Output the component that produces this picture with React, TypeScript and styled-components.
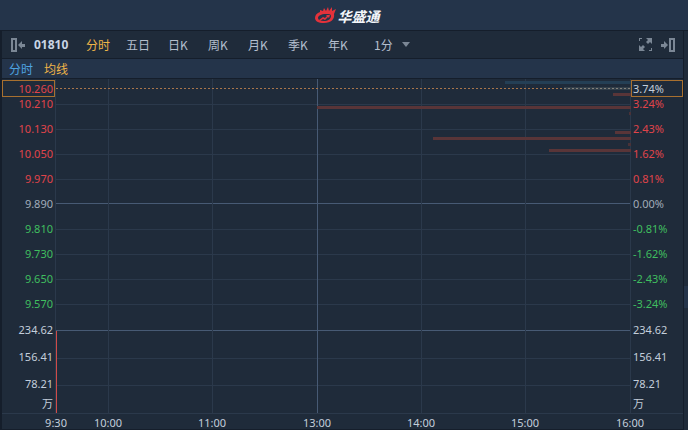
import React from 'react';
import styled, { createGlobalStyle } from 'styled-components';

const c = {
  bar: '#24344a',
  panel: '#1f2b3a',
  line: '#151e2b',
  grid: '#2b394b',
  strong: '#475a74',
  text: '#b4bfce',
  bright: '#c3cedb',
  up: '#e0444a',
  down: '#3fbe5f',
  amber: '#f0b548',
  box: '#a8702f',
  icon: '#7b8795',
};

const Global = createGlobalStyle`
  * { box-sizing: border-box; }
  body { margin: 0; background: ${c.panel}; color: ${c.text};
    font-family: "Noto Sans", "Noto Sans CJK SC", sans-serif; font-size: 11px; }
  button, select { font: inherit; color: inherit; background: none; border: 0; margin: 0; padding: 0; cursor: pointer; }
`;

const Page = styled.div`
  min-height: 100vh;
  display: flex;
  flex-direction: column;
`;
const Header = styled.header`
  height: 31px;
  display: flex;
  align-items: center;
  justify-content: center;
  gap: 2px;
  background: ${c.bar};
  border-bottom: 1px solid ${c.line};
  padding: 1px 0 0 6px;
`;
const Brand = styled.h1`
  margin: 0;
  font: italic 700 14px/20px "Noto Sans CJK SC", sans-serif;
  color: #f3f6fa;
`;
const Body = styled.div`
  flex: 1;
  display: grid;
  grid-template-columns: minmax(0, 1fr) 4px;
`;
const Panel = styled.main`
  border: solid ${c.line};
  border-width: 0 1px 1px 2px;
  display: flex;
  flex-direction: column;
`;
const SideStrip = styled.div`
  padding-top: 255px;
  &::before { content: ''; display: block; height: 22px; background: ${c.bar}; }
`;
const Toolbar = styled.nav`
  height: 28px;
  display: flex;
  align-items: center;
  padding: 0 8px 0 9px;
  font-size: 12px;
  font-family: "Noto Sans CJK SC", sans-serif;
  color: ${c.text};
  border-bottom: 1px solid ${c.line};
`;
const IconButton = styled.button`
  display: flex;
  margin-left: 8px;
  &:first-child { margin-left: 0; }
`;
const Symbol = styled.strong`
  width: 44px;
  margin-left: 8px;
  font: 700 12px/20px "Noto Sans", sans-serif;
  color: #c9d5e5;
`;
const Tab = styled.button<{ $active?: boolean }>`
  width: 40px;
  height: 20px;
  line-height: 20px;
  text-align: center;
  color: ${p => (p.$active ? c.amber : c.text)};
`;
const Period = styled.label`
  display: flex;
  align-items: center;
  gap: 8px;
  margin: 0 auto 0 16px;
`;
const PeriodSelect = styled.select`
  appearance: none;
  width: 20px;
  height: 20px;
`;
const Legend = styled.div`
  height: 20px;
  display: flex;
  gap: 11px;
  padding-left: 7px;
  font: 12px/19px "Noto Sans CJK SC", sans-serif;
  background: ${c.bar};
  border-bottom: 1px solid ${c.line};
`;
const Series = styled.span<{ $color: string }>`
  color: ${p => p.$color};
`;
const Chart = styled.section`
  flex: 1;
  display: grid;
  grid-template-columns: 53px minmax(0, 1fr) 52px;
  grid-template-rows: minmax(334px, 1fr) 16px;
`;
const Axis = styled.div<{ $right?: boolean }>`
  display: flex;
  flex-direction: column;
  padding-top: 1px;
  text-align: ${p => (p.$right ? 'left' : 'right')};
`;
const Tick = styled.div<{ $color: string; $h: number }>`
  height: ${p => p.$h}px;
  line-height: ${p => p.$h}px;
  padding: 0 2px;
  color: ${p => p.$color};
`;
const TopTick = styled(Tick)`
  margin-bottom: 5px;
`;
const Current = styled.div<{ $color: string }>`
  height: 17px;
  line-height: 15px;
  padding: 0 1px;
  border: 1px solid ${c.box};
  color: ${p => p.$color};
`;
const Plot = styled.svg`
  width: 100%;
  height: 100%;
  min-height: 0;
  display: block;
  shape-rendering: crispEdges;
`;
const Times = styled.div`
  grid-column: 1 / -1;
  display: grid;
  grid-template-columns: 52fr 104fr 105fr 104fr 104fr 105fr 0;
  padding: 0 53px 0 54px;
  border-top: 1px solid ${c.grid};
  line-height: 17px;
  color: ${c.bright};
`;
const Time = styled.span`
  width: 0;
  display: flex;
  justify-content: center;
  white-space: nowrap;
`;

const levels: [string, string, string][] = [
  ['10.130', '2.43%', c.up],
  ['10.050', '1.62%', c.up],
  ['9.970', '0.81%', c.up],
  ['9.890', '0.00%', '#a1abb9'],
  ['9.810', '-0.81%', c.down],
  ['9.730', '-1.62%', c.down],
  ['9.650', '-2.43%', c.down],
  ['9.570', '-3.24%', c.down],
];
const volumes = ['234.62', '156.41', '78.21'];
const times = ['9:30', '10:00', '11:00', '13:00', '14:00', '15:00', '16:00'];
const tabs = ['分时', '五日', '日K', '周K', '月K', '季K', '年K'];
const depth: [number, number, string][] = [
  [450, 2, '#243f55'],
  [509, 8, '#33404b'],
  [558, 14, '#593538'],
  [262, 27, '#593538'],
  [574, 33, '#493238'],
  [560, 52, '#593538'],
  [378, 58, '#593538'],
  [573, 64, '#493238'],
  [494, 70, '#593538'],
];

function PriceAxis({ right }: { right?: boolean }) {
  return (
    <Axis $right={right}>
      <Current $color={right ? c.bright : c.up}>{right ? '3.74%' : '10.260'}</Current>
      <TopTick $h={14} $color={c.up}>{right ? '3.24%' : '10.210'}</TopTick>
      {levels.map(([price, pct, color]) => (
        <Tick key={price} $h={25} $color={color}>{right ? pct : price}</Tick>
      ))}
      {volumes.map(v => <Tick key={v} $h={27} $color={c.bright}>{v}</Tick>)}
      <Tick $h={14} $color={c.bright}>万</Tick>
    </Axis>
  );
}

function PlotArea() {
  return (
    <Plot viewBox="0 0 576 334" preserveAspectRatio="none" role="img" aria-label="分时">
      <path d="M0 25.5H576M0 50.5H576M0 75.5H576M0 100.5H576M0 150.5H576M0 175.5H576M0 200.5H576M0 225.5H576M0 279.5H576M0 306.5H576" stroke={c.grid} />
      <path d="M0 124.5H576M0 251.5H576M262.5 0V334" stroke={c.strong} />
      <path d="M.5 0V334M53.5 0V334M157.5 0V334M366.5 0V334M470.5 0V334M575.5 0V334" stroke={c.grid} />
      {depth.map(([x, y, fill]) => (
        <rect key={y} x={x} y={y} width={576 - x} height="3" fill={fill} />
      ))}
      <path d="M1 9.5H509" stroke="#a8754b" strokeDasharray="2 2" />
      <path d="M509 9.5H575" stroke="#83817b" strokeDasharray="2 2" />
      <path d="M1.5 252V334" stroke="#d04b48" />
    </Plot>
  );
}

const DockIcon = ({ flip }: { flip?: boolean }) => (
  <svg width="15" height="14" viewBox="0 0 15 14" fill={c.icon}>
    <g transform={flip ? 'matrix(-1 0 0 1 15 0)' : undefined}>
      <path fillRule="evenodd" d="M0 0H6V14H0ZM2 2V12H4V2Z" />
      <path d="M7 7L11 3V6H14V9H11V11Z" />
    </g>
  </svg>
);

export default function App() {
  return (
    <Page>
      <Global />
      <Header>
        <svg width="21" height="17" viewBox="0 0 21 17" aria-hidden="true">
          <g fill="#e3323b">
            <path fillRule="evenodd" d="M5 5L5 3L8 4L9 1L11 4L13 0L14 4L17 0L17 4L21 2L19 7C20 12 16 16 9 16C3 16 0 14 0 11C0 8 2 6 5 5ZM3 11C3 13 5 14 9 14C13 14 16 12 16 9C16 7 14 7 11 7C6 7 3 9 3 11Z" />
            <path d="M4 13L8 10L10 11L12 9L11 8L15 8L14 11L13 10L10 13L8 12L5 14Z" />
          </g>
        </svg>
        <Brand>华盛通</Brand>
      </Header>
      <Body>
        <Panel>
          <Toolbar>
            <IconButton aria-label="展开左栏"><DockIcon /></IconButton>
            <Symbol>01810</Symbol>
            {tabs.map((t, i) => <Tab key={t} $active={i === 0}>{t}</Tab>)}
            <Period>
              <PeriodSelect aria-label="周期" defaultValue="1"><option value="1">1分</option></PeriodSelect>
              <svg width="8" height="5" viewBox="0 0 8 5" aria-hidden="true"><path d="M0 0H8L4 5Z" fill={c.icon} /></svg>
            </Period>
            <IconButton aria-label="全屏">
              <svg width="13" height="13" viewBox="0 0 13 13" fill={c.icon}>
                <path d="M0 0H3V1H1V3H0ZM10 12H12V10H13V13H10ZM7 0H13V6L11 4L9 6L7 4L9 2ZM0 7L2 9L4 7L6 9L4 11L6 13H0Z" />
              </svg>
            </IconButton>
            <IconButton aria-label="展开右栏"><DockIcon flip /></IconButton>
          </Toolbar>
          <Legend>
            <Series $color="#4ea3e0">分时</Series>
            <Series $color={c.amber}>均线</Series>
          </Legend>
          <Chart>
            <PriceAxis />
            <PlotArea />
            <PriceAxis right />
            <Times>{times.map(t => <Time key={t}>{t}</Time>)}</Times>
          </Chart>
        </Panel>
        <SideStrip />
      </Body>
    </Page>
  );
}
